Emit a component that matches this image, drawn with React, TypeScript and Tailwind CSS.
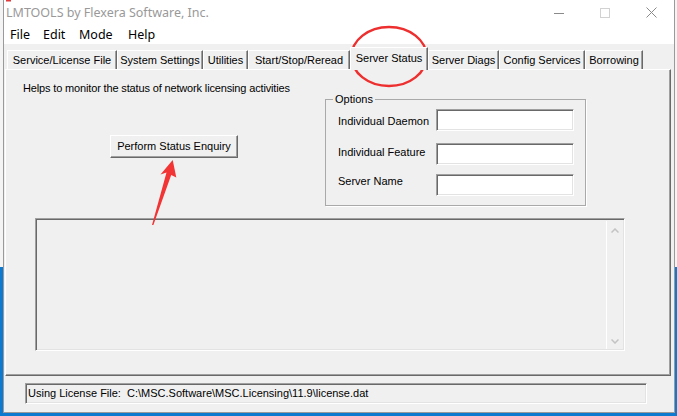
import React from 'react';

const tabs = [
  { label: 'Service/License File', w: 'w-[110px]' },
  { label: 'System Settings', w: 'w-[86px]' },
  { label: 'Utilities', w: 'w-[45px]' },
  { label: 'Start/Stop/Reread', w: 'w-[102px]' },
  { label: 'Server Status', w: 'w-[78px]', active: true },
  { label: 'Server Diags', w: 'w-[71px]' },
  { label: 'Config Services', w: 'w-[86px]' },
  { label: 'Borrowing', w: 'w-[58px]' },
];

const sunken =
  'border border-t-[#a0a0a0] border-l-[#a0a0a0] border-r-white border-b-white shadow-[inset_1px_1px_#696969,inset_-1px_-1px_#e3e3e3]';

const OptionRow: React.FC<{ label: string; top: string; labelShift: string }> = ({ label, top, labelShift }) => (
  <div className={`flex items-center ${top}`}>
    <span className={`w-[110px] shrink-0 whitespace-nowrap pl-[12px] ${labelShift}`}>{label}</span>
    <div className={`w-[138px] h-[22px] bg-white ${sunken}`} />
  </div>
);

const App: React.FC = () => {
  return (
    <div className="w-[677px] h-[416px] overflow-hidden relative flex pl-[3px] pr-[2px] pb-[3px] bg-[linear-gradient(to_bottom,#f4f4f4_267px,#0d7ad0_267px)] font-['Liberation_Sans',Arial,sans-serif] text-[11px] leading-[13px] text-black">
      <div className="flex-1 flex flex-col bg-[#f0f0f0] border-x border-b border-[#9a9a9a]">
        {/* title bar */}
        <div className="h-[25px] bg-white flex items-center justify-between font-['Noto_Sans',sans-serif] text-[12.5px]">
          <span className="pl-[2px] text-[#999999]">LMTOOLS by Flexera Software, Inc.</span>
          <div className="flex h-full">
            <div className="w-[46px] h-full flex items-center justify-center">
              <svg width="10" height="10" viewBox="0 0 10 10">
                <line x1="0" y1="5.5" x2="10" y2="5.5" stroke="#8a8a8a" strokeWidth="1" />
              </svg>
            </div>
            <div className="w-[46px] h-full flex items-center justify-center">
              <svg width="10" height="10" viewBox="0 0 10 10">
                <rect x="0.5" y="0.5" width="9" height="9" fill="none" stroke="#d2d2d2" strokeWidth="1" />
              </svg>
            </div>
            <div className="w-[46px] h-full flex items-center justify-center">
              <svg width="11" height="11" viewBox="0 0 11 11">
                <path d="M0.5 0.5 L10.5 10.5 M10.5 0.5 L0.5 10.5" stroke="#8a8a8a" strokeWidth="1" />
              </svg>
            </div>
          </div>
        </div>

        {/* menu bar */}
        <div className="h-[19px] bg-white flex items-center font-['Noto_Sans',sans-serif] text-[12.5px]">
          <span className="w-[32px] pl-[6px]">File</span>
          <span className="w-[36px] pl-[7px]">Edit</span>
          <span className="w-[49px] pl-[7px]">Mode</span>
          <span className="pl-[7px]">Help</span>
        </div>

        {/* client area */}
        <div className="flex-1 flex flex-col pt-[3px] pl-[1px] pr-[3px]">
          <div className="h-[22px] flex items-end pl-[2px]">
            {tabs.map((t) =>
              t.active ? (
                <div
                  key={t.label}
                  className={`${t.w} h-[23px] -mb-[1px] relative z-10 bg-[#f0f0f0] border-t border-l border-white border-r border-r-[#696969] shadow-[inset_-1px_0_#a0a0a0] flex justify-center pt-[4px]`}
                >
                  {t.label}
                </div>
              ) : (
                <div
                  key={t.label}
                  className={`${t.w} h-[19px] border-t border-l border-white border-r border-r-[#696969] shadow-[inset_-1px_0_#a0a0a0] flex justify-center items-center`}
                >
                  {t.label}
                </div>
              )
            )}
          </div>

          {/* tab panel */}
          <div className="h-[307px] flex flex-col border border-t-white border-l-white border-r-[#696969] border-b-[#696969] shadow-[inset_-1px_-1px_#a0a0a0]">
            <div className="flex">
              <div className="w-[319px] flex flex-col">
                <p className="pl-[17px] pt-[12px] tracking-[-0.15px]">Helps to monitor the status of network licensing activities</p>
                <button className="ml-[104px] mt-[40px] w-[128px] h-[23px] flex items-center justify-center bg-[#f0f0f0] border border-t-white border-l-white border-r-[#696969] border-b-[#696969] shadow-[inset_-1px_-1px_#a0a0a0]">
                  Perform Status Enquiry
                </button>
              </div>
              <fieldset className="mt-[23px] w-[261px] h-[113px] border border-[#a9a9a9] shadow-[1px_1px_white]">
                <legend className="ml-[7px] px-[2px]">Options</legend>
                <OptionRow label="Individual Daemon" top="mt-[3px]" labelShift="mt-[2px]" />
                <OptionRow label="Individual Feature" top="mt-[12px]" labelShift="-mt-[4px]" />
                <OptionRow label="Server Name" top="mt-[9px]" labelShift="-mt-[8px]" />
              </fieldset>
            </div>

            {/* output list */}
            <div className={`ml-[29px] mt-[12px] w-[590px] h-[133px] flex ${sunken}`}>
              <div className="flex-1" />
              <div className="w-[17px] mr-[1px] mb-[1px] mt-[2px] border-l border-white flex flex-col items-center justify-between pt-[7px] pb-[5px]">
                <svg width="8" height="5" viewBox="0 0 8 5">
                  <polyline points="0.5,4.5 4,1 7.5,4.5" fill="none" stroke="#c3c3c3" strokeWidth="1.5" />
                </svg>
                <svg width="8" height="5" viewBox="0 0 8 5">
                  <polyline points="0.5,0.5 4,4 7.5,0.5" fill="none" stroke="#c3c3c3" strokeWidth="1.5" />
                </svg>
              </div>
            </div>
          </div>

          {/* status bar */}
          <div className={`ml-[20px] mt-[7px] w-[622px] h-[21px] flex items-center pl-[2px] ${sunken}`}>
            <span className="whitespace-pre">Using License File:  C:\MSC.Software\MSC.Licensing\11.9\license.dat</span>
          </div>
        </div>
      </div>

      {/* red annotations */}
      <svg className="absolute left-0 top-0 pointer-events-none" width="677" height="416" viewBox="0 0 677 416">
        <ellipse cx="389" cy="56.5" rx="37.5" ry="29.5" fill="none" stroke="#ee2f2f" strokeWidth="2.5" />
        <polygon
          points="172.7,160 176.3,177.5 171.2,175 153.4,225 152,225 166.5,172.5 160.5,174.5"
          fill="#f23434"
        />
        <rect x="6" y="0" width="5" height="1.5" fill="#e03a3a" />
      </svg>
    </div>
  );
};

export default App;
